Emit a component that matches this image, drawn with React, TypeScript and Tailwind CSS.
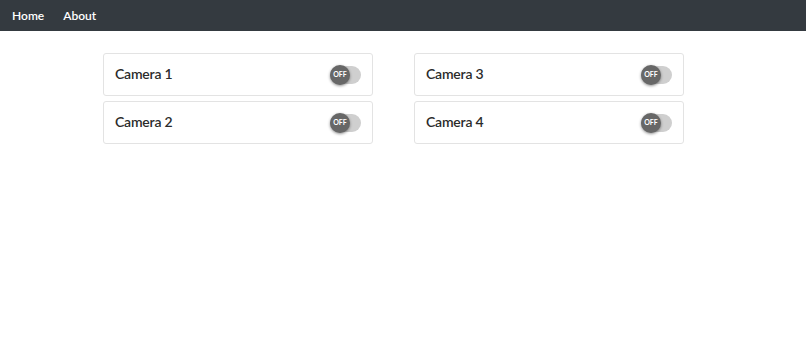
import {FC} from 'react';

const cameras = [
  ['Camera 1', 'Camera 2'],
  ['Camera 3', 'Camera 4'],
];

const Toggle: FC = () => (
  <div className="relative w-[31px] h-[18px] rounded-full bg-[#cfcfcf]">
    <div className="absolute left-0 top-[-1px] w-5 h-5 rounded-full bg-[#676767] shadow-[0_1px_3px_rgba(0,0,0,0.45)] flex items-center justify-center">
      <span className="text-[7px] font-bold text-white leading-none">OFF</span>
    </div>
  </div>
);

const CameraCard: FC<{name: string}> = ({name}) => (
  <div className="h-[43px] flex items-center justify-between pl-[11px] pr-[11px] bg-white border border-[#e3e3e3] rounded-[3px]">
    <span className="text-[14px] font-semibold text-[#2b2b2b] pb-[2px] tracking-[-0.2px]">{name}</span>
    <Toggle />
  </div>
);

const App: FC = () => {
  return (
    <div className="min-h-screen bg-white font-['Lato','Noto_Sans',sans-serif]">
      <nav className="h-[31px] bg-[#343a40] flex items-center gap-[19px] pl-3">
        <span className="text-white text-[12px] font-semibold">Home</span>
        <span className="text-white text-[12px] font-semibold">About</span>
      </nav>
      <div className="flex gap-[41px] pl-[103px] pt-[22px]">
        {cameras.map((col, i) => (
          <div key={i} className="w-[270px] flex flex-col gap-[5px]">
            {col.map(name => (
              <CameraCard key={name} name={name} />
            ))}
          </div>
        ))}
      </div>
    </div>
  );
};

export default App;
